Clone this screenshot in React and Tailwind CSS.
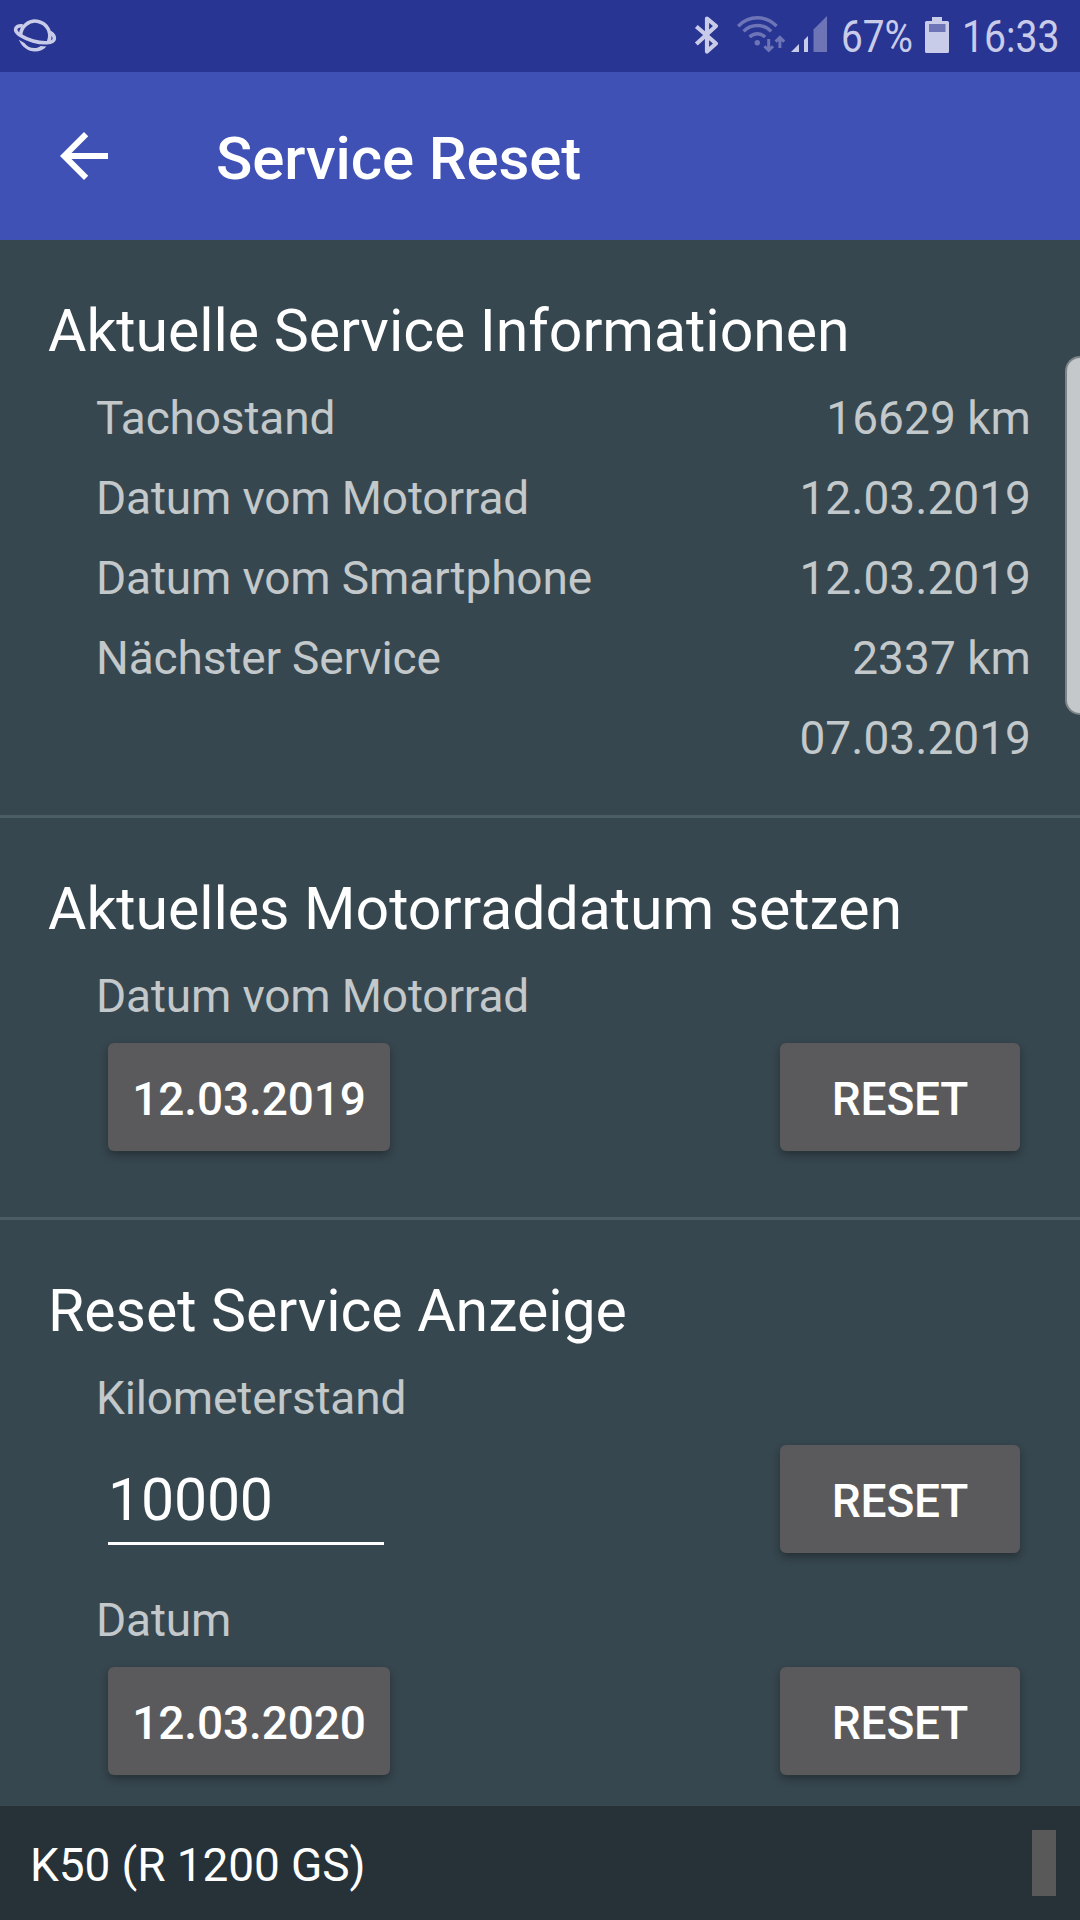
import { useState } from "react";

const infoRows = [
  { label: "Tachostand", value: "16629 km" },
  { label: "Datum vom Motorrad", value: "12.03.2019" },
  { label: "Datum vom Smartphone", value: "12.03.2019" },
  { label: "Nächster Service", value: "2337 km" },
  { label: "", value: "07.03.2019" },
];

function PlanetIcon() {
  return (
    <svg className="w-[72px] h-[72px]" viewBox="0 0 72 72" fill="none">
      <g stroke="#c9cce8" strokeWidth="3.6">
        <path d="M20.6 35.5A14.6 14.6 0 1 1 48.6 41.5" />
        <path d="M22.6 25.8C18 25.4 15.6 27 15.6 29.6C15.8 33.5 24 38.4 33 41C42 43.4 53.8 44 54.4 38.6C54.6 36 52.6 34 50 32.4" />
      </g>
      <path
        d="M18.8 39.8C22 47 28 51.6 35 51.6C39.6 51.6 43.6 49.8 46.4 46.4L40.6 46C38.6 47.6 37 48 34.6 48C30 48 26.6 46 24.4 43Z"
        fill="#c9cce8"
      />
    </svg>
  );
}

function StatusIcons() {
  return (
    <svg className="w-[140px] h-[72px]" viewBox="690 0 140 72" fill="none">
      <path
        d="M696.3 26.5L716 43.5L707 51.5V18.5L716 26L696.3 44"
        stroke="#c9cce8"
        strokeWidth="4.2"
        strokeLinejoin="round"
      />
      <g stroke="#6d75b7" strokeWidth="3.4">
        <path d="M738.2 26.2C749 15 766 15 776.6 26.2" />
        <path d="M743.6 31.4C751.4 23.6 763.4 23.6 771.2 31.4" />
        <path d="M749.6 37C754.2 32.6 760.6 32.6 765.2 37" />
        <path d="M768.7 39V50M764.4 46.2L768.7 50.4L773 46.2" strokeWidth="3" />
        <path d="M779.9 48V37.6M775.6 41.6L779.9 37.4L784.2 41.6" strokeWidth="3" />
      </g>
      <circle cx="757.3" cy="42.8" r="2.7" fill="#6d75b7" />
      <path d="M791 52L799 44V52Z" fill="#c9cce8" />
      <path d="M804 52V40L808 36V52Z" fill="#c9cce8" />
      <path d="M813.5 52V29.5L827 16V52Z" fill="#6d75b7" />
    </svg>
  );
}

function BatteryIcon() {
  return (
    <svg className="w-6 h-9" viewBox="0 0 24 36">
      <path
        d="M7 0H17V4H22.5A1.5 1.5 0 0 1 24 5.5V34.5A1.5 1.5 0 0 1 22.5 36H1.5A1.5 1.5 0 0 1 0 34.5V5.5A1.5 1.5 0 0 1 1.5 4H7Z"
        fill="#c9cce8"
      />
      <path d="M4 7H20.5V15H4Z" fill="#6d75b7" />
    </svg>
  );
}

function StatusBar() {
  return (
    <div className="h-[72px] bg-[#283593] flex items-center text-[#c9cce8] text-[45px] leading-[72px]">
      <PlanetIcon />
      <div className="ml-auto flex items-center">
        <StatusIcons />
        <div className="w-[83px] ml-[11px] whitespace-nowrap">
          <span className="inline-block origin-left translate-y-px scale-x-[0.862]">
            67%
          </span>
        </div>
        <div className="ml-px mb-0.5">
          <BatteryIcon />
        </div>
        <div className="w-[118px] ml-[13px] whitespace-nowrap">
          <span className="inline-block origin-left translate-y-px scale-x-[0.87]">
            16:33
          </span>
        </div>
      </div>
    </div>
  );
}

function Section({ title, children, last }) {
  return (
    <section
      className={`pt-[55px] pl-12 pr-12 ${last ? "" : "border-b-[3px] border-[#4b5d65]"}`}
    >
      <h2 className="text-[59px] leading-[71px] tracking-[-0.05px] text-white whitespace-nowrap mb-3">
        {title}
      </h2>
      <div className="pl-12">{children}</div>
    </section>
  );
}

function Label({ children }) {
  return (
    <div className="h-20 leading-[80px] text-[46px] tracking-[-0.15px]">
      {children}
    </div>
  );
}

function Value({ children }) {
  return (
    <div className="h-20 leading-[80px] text-[46px] tracking-[0.05px] pr-px">
      {children}
    </div>
  );
}

function Button({ wide, children, onClick }) {
  return (
    <button
      onClick={onClick}
      className={`h-[108px] pt-1 rounded-[6px] bg-[#5a5a5c] text-white text-[46px] leading-[104px] font-medium shadow-[0_4px_9px_rgba(0,0,0,0.32)] ${
        wide ? "w-[282px] tracking-[-0.1px]" : "w-[240px] tracking-[-0.2px]"
      }`}
    >
      {children}
    </button>
  );
}

export default function App() {
  const [km, setKm] = useState("10000");

  return (
    <div className="relative w-[1080px] h-[1920px] flex flex-col overflow-hidden bg-[#37474f] font-['Roboto',sans-serif]">
      <StatusBar />
      <header className="h-[168px] bg-[#3f51b5] flex items-center">
        <svg className="w-[48px] h-[48px] ml-[60px]" viewBox="4 4 16 16">
          <path
            d="M20 11H7.83l5.59-5.59L12 4l-8 8 8 8 1.41-1.41L7.83 13H20v-2z"
            fill="#fff"
          />
        </svg>
        <h1 className="ml-[108px] pt-[5px] text-[60px] leading-[70px] tracking-[-0.1px] font-medium text-white whitespace-nowrap">
          Service Reset
        </h1>
      </header>

      <main className="flex-1 min-h-0 text-[#c3c8ca]">
        <Section title="Aktuelle Service Informationen">
          <div className="pb-[37px]">
            {infoRows.map((row, i) => (
              <div key={i} className="flex justify-between">
                <Label>{row.label}</Label>
                <Value>{row.value}</Value>
              </div>
            ))}
          </div>
        </Section>

        <Section title="Aktuelles Motorraddatum setzen">
          <Label>Datum vom Motorrad</Label>
          <div className="flex justify-between px-3 pt-[7px] pb-[66px]">
            <Button wide>12.03.2019</Button>
            <Button>RESET</Button>
          </div>
        </Section>

        <Section title="Reset Service Anzeige" last>
          <Label>Kilometerstand</Label>
          <div className="flex justify-between px-3 pt-[7px] pb-[27px]">
            <input
              value={km}
              onChange={(e) => setKm(e.target.value)}
              className="w-[276px] h-[100px] pt-3 border-b-[3px] border-white text-white text-[59px] tracking-[-0.2px] outline-none"
            />
            <Button onClick={() => setKm("0")}>RESET</Button>
          </div>
          <Label>Datum</Label>
          <div className="flex justify-between px-3 pt-[7px]">
            <Button wide>12.03.2020</Button>
            <Button>RESET</Button>
          </div>
        </Section>
      </main>

      <footer className="h-[114px] bg-[#263238] flex items-center justify-between pl-[30px] pr-6">
        <span className="pt-1 text-[46px] tracking-[-0.1px] text-white">
          K50 (R 1200 GS)
        </span>
        <div className="w-6 h-[66px] bg-[#595959]" />
      </footer>

      {/* edge panel handle */}
      <div className="absolute right-0 top-[356px] w-[15px] h-[359px] rounded-l-[18px] border-2 border-r-0 border-[#7d8589] bg-[#c5c8ca]" />
    </div>
  );
}
